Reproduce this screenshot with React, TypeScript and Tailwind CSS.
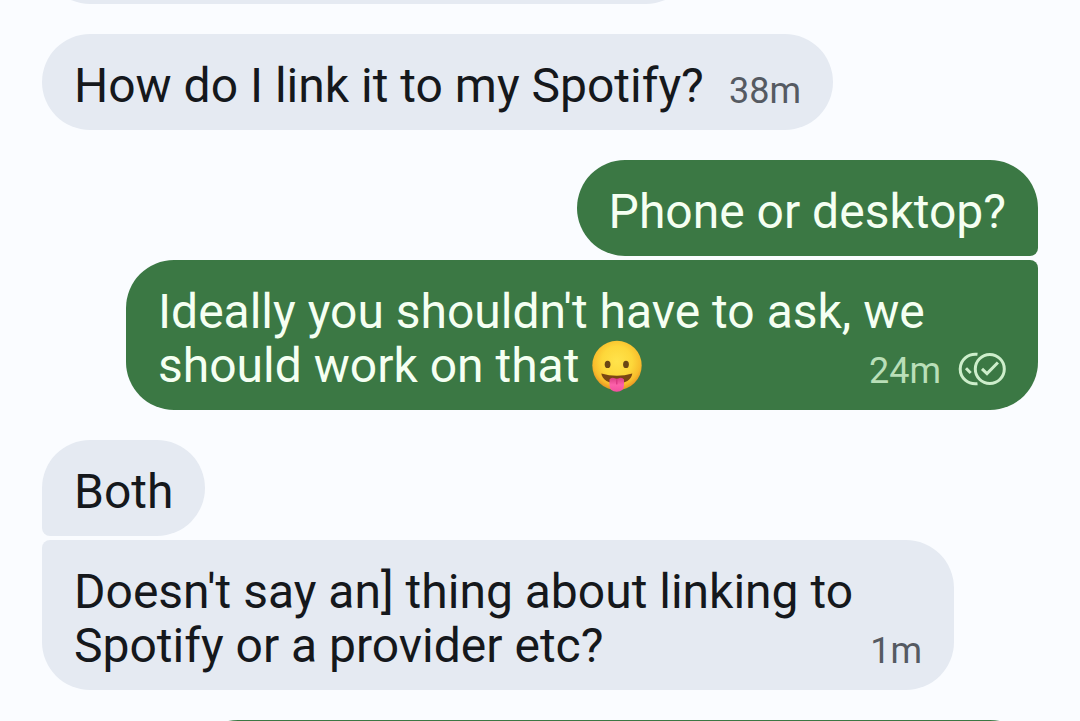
import type { ReactNode } from "react";

function TongueEmoji() {
  return (
    <svg role="img" aria-label="Face with tongue" viewBox="0 0 52 52" className="inline-block size-[52px] align-[-10px]">
      <defs>
        <radialGradient id="face" cx="50%" cy="42%" r="56%">
          <stop offset="0" stopColor="#ffe34c" />
          <stop offset="0.55" stopColor="#fdd73a" />
          <stop offset="0.85" stopColor="#f8bd2c" />
          <stop offset="1" stopColor="#ea9a24" />
        </radialGradient>
        <linearGradient id="tongue" x1="0" x2="0" y1="0" y2="1">
          <stop offset="0" stopColor="#d93d83" />
          <stop offset="0.5" stopColor="#fc62aa" />
          <stop offset="1" stopColor="#f250a0" />
        </linearGradient>
      </defs>
      <circle cx="26" cy="25.500" r="24.700" fill="url(#face)" />
      <ellipse cx="16.600" cy="24.400" rx="2.900" ry="3.700" fill="#6a4714" />
      <ellipse cx="35" cy="24.400" rx="2.900" ry="3.700" fill="#6a4714" />
      <path d="M10.300 33.500Q26 38 41.300 33.500C40.500 40 34 43.500 26 43.500S11.300 40 10.300 33.500Z" fill="#7a4612" />
      <path d="M18.500 39.500Q20 37.300 23 38Q25.800 39.500 28.500 38Q31.500 37.300 33 39.500V45Q33 51.700 25.800 51.700T18.500 45Z" fill="url(#tongue)" />
      <path d="M25.800 39.500V44" stroke="#d93480" strokeWidth="1.200" strokeLinecap="round" />
    </svg>
  );
}

function ReadReceipt() {
  return (
    <svg role="img" aria-label="Read" viewBox="0 0 48 34" fill="none" stroke="#cdeecb" strokeWidth="3" className="mb-1 ml-[17px] h-[34px] w-12 shrink-0">
      <path d="M19.500 2.300C10 1.200 2.200 8 2.200 17S10 32.800 19.500 31.700" />
      <circle cx="31.800" cy="17" r="14.500" />
      <path d="M8 16.300L12.700 21" />
      <path d="M24 16.800L29 21.600L39.900 10.500" />
    </svg>
  );
}

type BubbleProps = {
  sent?: boolean;
  shape: string;
  time?: string;
  read?: boolean;
  children: ReactNode;
};

function Bubble({ sent, shape, time, read, children }: BubbleProps) {
  return (
    <div
      className={`grid max-w-full px-8 pt-[25px] pb-[17px] ${shape} ${
        sent ? "self-end bg-[#3b7844] text-[#f5fff2]" : "self-start bg-[#e5eaf2] text-[#15181c]"
      }`}
    >
      <p className="col-start-1 row-start-1 text-[48px] leading-[54px]">{children}</p>
      {time && (
        <div className="col-start-1 row-start-1 flex h-[54px] items-center self-end justify-self-end pt-2.5">
          <time className={`text-[36px] leading-[44px] ${sent ? "text-[#b9dfb8]" : "text-[#555a62]"}`}>{time}</time>
          {read && <ReadReceipt />}
        </div>
      )}
    </div>
  );
}

export default function App() {
  return (
    <main className="flex h-screen flex-col overflow-hidden bg-[#fafcff] px-[42px] font-['Roboto',sans-serif]">
      <div className="h-1 shrink-0 overflow-hidden">
        <div className="-mt-[92px] h-24 w-[652px] max-w-full rounded-[48px] bg-[#e5eaf2]" />
      </div>
      <div className="mt-[30px] flex flex-col">
        <Bubble shape="w-[791px] rounded-[48px]" time="38m">
          How do I link it to my Spotify?
        </Bubble>
      </div>
      <div className="mt-[30px] flex flex-col gap-1">
        <Bubble sent shape="w-fit rounded-[48px] rounded-br-lg">
          Phone or desktop?
        </Bubble>
        <Bubble sent shape="w-[912px] rounded-[48px] rounded-tr-lg" time="24m" read>
          Ideally you shouldn't have to ask, we
          <br />
          should work on that <TongueEmoji />
        </Bubble>
      </div>
      <div className="mt-[30px] flex flex-col gap-1">
        <Bubble shape="w-fit rounded-[48px] rounded-bl-lg">Both</Bubble>
        <Bubble shape="w-[912px] rounded-[48px] rounded-tl-lg" time="1m">
          Doesn't say an] thing about linking to
          <br />
          Spotify or a provider etc?
        </Bubble>
      </div>
      <div className="mt-[30px] h-24 w-[848px] max-w-full shrink-0 self-end rounded-[48px] bg-[#3b7844]" />
    </main>
  );
}
